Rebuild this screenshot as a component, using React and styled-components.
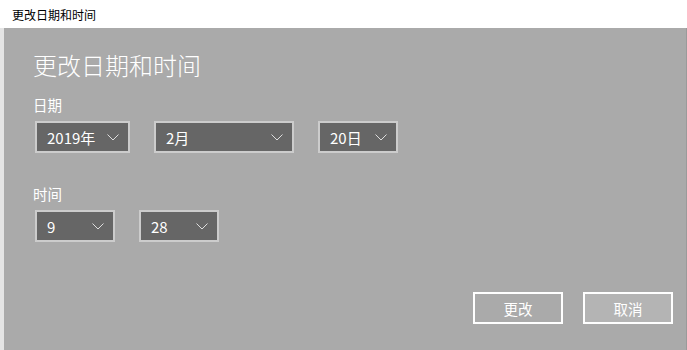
import React from "react";
import styled, { createGlobalStyle } from "styled-components";

const Global = createGlobalStyle`
  html, body { margin: 0; padding: 0; background: #aaaaaa; }
  body { font-family: "Noto Sans CJK SC", "Noto Sans", sans-serif; }
  * { box-sizing: border-box; }
`;

const Window = styled.div`
  width: 687px;
  height: 350px;
  display: flex;
  flex-direction: column;
  overflow: hidden;
`;

const TitleBar = styled.div`
  height: 28px;
  background: #ffffff;
  display: flex;
  align-items: center;
  padding-left: 12px;
  font-size: 12px;
  color: #000;
`;

const Frame = styled.div`
  flex: 1;
  display: flex;
`;

const Edge = styled.div`
  width: ${(p) => p.$w}px;
  background: ${(p) => p.$c};
`;

const Content = styled.div`
  flex: 1;
  background: #aaaaaa;
  padding: 21px 13px 0 29px;
  display: flex;
  flex-direction: column;
  color: #ffffff;
`;

const Heading = styled.div`
  font-size: 24px;
  line-height: 32px;
  font-weight: 300;
`;

const Label = styled.div`
  font-size: 14.5px;
  line-height: 20px;
  margin-top: ${(p) => p.$mt}px;
`;

const Row = styled.div`
  display: flex;
  gap: 24px;
  margin-top: 6.5px;
  padding-left: 2px;
`;

const Select = styled.div`
  width: ${(p) => p.$w}px;
  height: 32px;
  background: #666666;
  border: 2px solid #cccccc;
  display: flex;
  align-items: center;
  justify-content: space-between;
  padding: 0 9px 0 10px;
  font-size: 15px;
  color: #ffffff;
`;

const Chevron = () => (
  <svg width="12" height="7" viewBox="0 0 12 7">
    <path d="M0.5 0.5 L6 6 L11.5 0.5" fill="none" stroke="#dddddd" strokeWidth="1" />
  </svg>
);

const Buttons = styled.div`
  display: flex;
  justify-content: flex-end;
  gap: 20px;
  margin-top: 50px;
`;

const Button = styled.div`
  width: 90px;
  height: 32px;
  border: 2px solid #ffffff;
  background: ${(p) => (p.$light ? "#b4b4b4" : "#aaaaaa")};
  display: flex;
  align-items: center;
  justify-content: center;
  font-size: 14.5px;
  color: #ffffff;
`;

export default function App() {
  return (
    <>
      <Global />
      <Window>
        <TitleBar>更改日期和时间</TitleBar>
        <Frame>
          <Edge $w={4} $c="#e4e4e4" />
          <Content>
            <Heading>更改日期和时间</Heading>
            <Label $mt={13.5}>日期</Label>
            <Row>
              <Select $w={95}>2019年<Chevron /></Select>
              <Select $w={140}>2月<Chevron /></Select>
              <Select $w={80}>20日<Chevron /></Select>
            </Row>
            <Label $mt={30.5}>时间</Label>
            <Row>
              <Select $w={80}>9<Chevron /></Select>
              <Select $w={80}>28<Chevron /></Select>
            </Row>
            <Buttons>
              <Button>更改</Button>
              <Button $light>取消</Button>
            </Buttons>
          </Content>
          <Edge $w={1} $c="#9a9a9a" />
        </Frame>
      </Window>
    </>
  );
}
